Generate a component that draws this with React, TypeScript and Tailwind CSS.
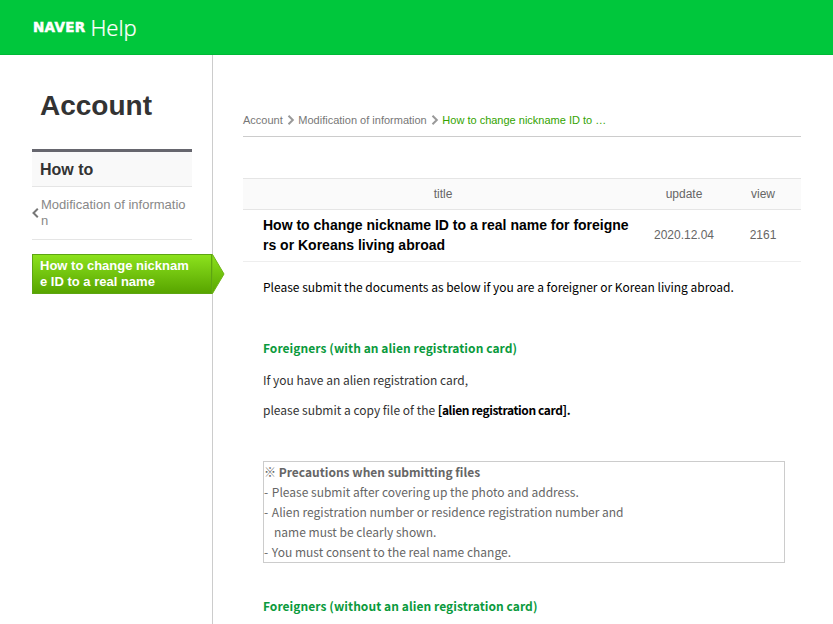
const sans = "font-['Liberation_Sans',Arial,sans-serif]";
const body = "font-['Noto_Sans_CJK_KR','Noto_Sans',sans-serif]";

function Chevron({ className }: { className: string }) {
  return (
    <svg viewBox="0 0 8 10" className={className} fill="none" stroke="currentColor" strokeWidth="2">
      <path d="M1.5 0.8 5.8 5 1.5 9.2" />
    </svg>
  );
}

function Sidebar() {
  return (
    <aside className={`relative w-[213px] shrink-0 border-r border-[#cccccc] ${sans}`}>
      <h2 className="pl-10 pt-[33px] text-[28px] font-bold leading-[36px] text-[#333333]">Account</h2>
      <div className="ml-8 mt-[25px] w-40">
        <div className="h-[37px] border-t-[3px] border-[#66666e] bg-[#f9f9f9] pl-2 text-base font-bold leading-[35px] text-[#333333]">
          How to
        </div>
        <div className="relative h-[54px] break-all border-y border-[#e5e5e5] pl-[9px] pr-[5px] pt-[10px] text-[13px] leading-4 text-[#888888]">
          <svg viewBox="0 0 7 10" className="absolute left-0 top-[21px] h-[10px] w-[7px] text-[#777777]" fill="none" stroke="currentColor" strokeWidth="2">
            <path d="M5.8 0.8 1.5 5 5.8 9.2" />
          </svg>
          Modification of information
        </div>
      </div>
      <div className="relative ml-8 mt-[14px] h-10 w-[180px] break-all border border-[#5da512] bg-gradient-to-b from-[#8ce21c] to-[#58a500] pl-[7px] pr-5 pt-[3px] text-[13px] font-bold leading-4 text-white">
        How to change nickname ID to a real name
        <svg viewBox="0 0 13 40" className="absolute left-[179px] top-[-1px] h-10 w-[13px]">
          <defs>
            <linearGradient id="tip" x1="0" y1="0" x2="0" y2="1">
              <stop offset="0" stopColor="#8ce21c" />
              <stop offset="1" stopColor="#58a500" />
            </linearGradient>
          </defs>
          <path d="M0 0.5 L0.5 0.5 12 20 0.5 39.5 L0 39.5Z" fill="url(#tip)" stroke="#6cb414" strokeWidth="1" />
        </svg>
      </div>
    </aside>
  );
}

function Breadcrumb() {
  return (
    <div className={`flex h-[44px] items-start gap-[3.8px] border-b border-[#cccccc] pt-[21px] text-[11px] leading-[13px] ${sans}`}>
      <span className="text-[#777777]">Account</span>
      <Chevron className="mt-[1px] h-[10px] w-2 text-[#999999]" />
      <span className="text-[#777777]">Modification of information</span>
      <Chevron className="mt-[1px] h-[10px] w-2 text-[#999999]" />
      <span className="text-[#33a300]">How to change nickname ID to …</span>
    </div>
  );
}

function ArticleRow() {
  return (
    <div className={sans}>
      <div className="grid h-[32px] grid-cols-[400px_82px_76px] items-center border-y border-[#e5e5e5] bg-[#fafafa] pb-px text-center text-xs text-[#666666]">
        <span>title</span>
        <span>update</span>
        <span>view</span>
      </div>
      <div className="grid h-[52px] grid-cols-[400px_82px_76px] items-center border-b border-[#eeeeee] pb-[2px] text-center text-xs text-[#666666]">
        <span className="break-all pl-5 pr-3 text-left text-sm font-bold leading-5 text-black">
          How to change nickname ID to a real name for foreigners or Koreans living abroad
        </span>
        <span>2020.12.04</span>
        <span>2161</span>
      </div>
    </div>
  );
}

export default function App() {
  return (
    <div className="flex h-screen flex-col overflow-hidden bg-white">
      <header className="flex h-[55px] shrink-0 items-center border-b border-[#00b836] bg-[#00c73c] pl-[33px] text-white">
        <span className="mt-[2px] text-[13.5px] font-black leading-none tracking-[0.3px] [-webkit-text-stroke:0.5px_white] font-['DejaVu_Sans',sans-serif]">NAVER</span>
        <span className="ml-[5px] text-[22px] font-light leading-none [-webkit-text-stroke:0.2px_white] font-['Noto_Sans',sans-serif]">Help</span>
      </header>
      <div className="flex min-h-0 flex-1">
        <Sidebar />
        <main className={`ml-[30px] w-[558px] pt-[38px] text-xs text-[#333333] ${body}`}>
          <Breadcrumb />
          <div className="mt-[41px]">
            <ArticleRow />
          </div>
          <div className="px-5 leading-[20px]">
            <p className="mt-[15px] text-black">Please submit the documents as below if you are a foreigner or Korean living abroad.</p>
            <h3 className="mt-[41px] font-bold tracking-[0.06px] text-[#0a9a3c]">Foreigners (with an alien registration card)</h3>
            <p className="mt-3">If you have an alien registration card,</p>
            <p className="mt-[10px]">
              please submit a copy file of the <b className="font-bold tracking-[-0.4px] text-black">[alien registration card].</b>
            </p>
            <div className="mt-[41px] h-[102px] w-[522px] border border-[#cccccc] text-[#666666]">
              <p className="font-bold">※ Precautions when submitting files</p>
              <p><span className="mr-[1px]">-</span> Please submit after covering up the photo and address.</p>
              <p><span className="mr-[1px]">-</span> Alien registration number or residence registration number and</p>
              <p className="pl-[10px]">name must be clearly shown.</p>
              <p><span className="mr-[1px]">-</span> You must consent to the real name change.</p>
            </div>
            <h3 className="mt-[33px] font-bold tracking-[0.06px] text-[#0a9a3c]">Foreigners (without an alien registration card)</h3>
          </div>
        </main>
      </div>
    </div>
  );
}
